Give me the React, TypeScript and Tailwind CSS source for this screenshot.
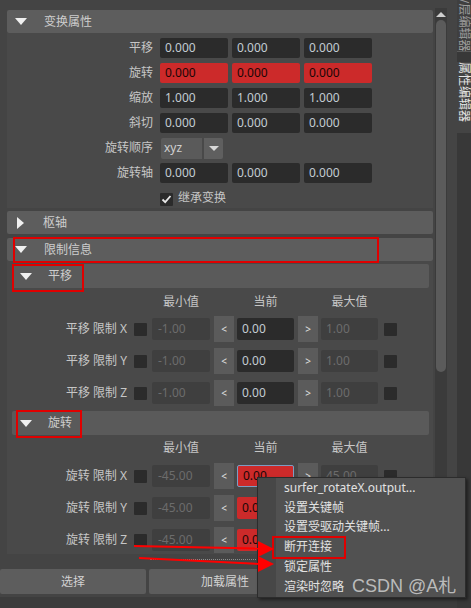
import React from "react";

function TriDown() {
  return <div className="w-0 h-0 border-l-[6px] border-r-[6px] border-t-[7px] border-l-transparent border-r-transparent border-t-[#f0f0f0]" />;
}

function TriRight() {
  return <div className="w-0 h-0 border-t-[6px] border-b-[6px] border-l-[7px] border-t-transparent border-b-transparent border-l-[#f0f0f0]" />;
}

function Header({ title, open, className = "" }: { title: string; open: boolean; className?: string }) {
  return (
    <div className={`h-[23px] bg-[#5d5d5d] rounded-[2px] flex items-center ${className}`}>
      {open ? (
        <div className="ml-[8px]">
          <TriDown />
        </div>
      ) : (
        <div className="ml-[10px] mr-[2px]">
          <TriRight />
        </div>
      )}
      <span className="ml-[17px] text-[12px] text-[#cdcdcd]">{title}</span>
    </div>
  );
}

function SubHeader({ title }: { title: string }) {
  return (
    <div className="ml-[5px] w-[417px] h-[24px] bg-[#5a5a5a] rounded-[2px] flex items-center">
      <div className="ml-[8px]">
        <TriDown />
      </div>
      <span className="ml-[16px] text-[12px] text-[#cdcdcd]">{title}</span>
    </div>
  );
}

function Field({ value, red }: { value: string; red?: boolean }) {
  return (
    <div
      className={`w-[68px] h-[20px] rounded-[2px] flex items-center pl-[5px] text-[12px] ${
        red ? "bg-[#cc2a2a] text-[#1a0606]" : "bg-[#2b2b2b] text-[#c3cbd3]"
      }`}
    >
      {value}
    </div>
  );
}

function Check({ checked }: { checked?: boolean }) {
  return (
    <div className="w-[13px] h-[13px] bg-[#2b2b2b] rounded-[1px] flex items-center justify-center">
      {checked && (
        <svg width="11" height="11" viewBox="0 0 11 11">
          <polyline points="1.5,5.5 4.2,8.2 9.5,2" fill="none" stroke="#e8e8e8" strokeWidth="1.8" />
        </svg>
      )}
    </div>
  );
}

function LimitRow({ label, min, max, red, focus }: { label: string; min: string; max: string; red?: boolean; focus?: boolean }) {
  return (
    <div className="h-[26px] flex items-center">
      <div className="w-[120px] text-right text-[12px] text-[#c6c6c6] whitespace-nowrap">{label}</div>
      <div className="ml-[7px]">
        <Check />
      </div>
      <div className="ml-[5px] w-[58px] h-[22px] rounded-[2px] bg-[#3f3f3f] flex items-center pl-[6px] text-[12px] text-[#6c6c6c]">{min}</div>
      <div className="ml-[4px] w-[20px] h-[26px] bg-[#5b5b5b] flex items-center justify-center text-[10px] text-[#e0e0e0]">&lt;</div>
      <div
        className={`ml-[3px] w-[57px] h-[22px] rounded-[2px] flex items-center pl-[5px] text-[12px] ${
          red ? "bg-[#cc2a2a] text-[#1a0606]" : "bg-[#2b2b2b] text-[#c3cbd3]"
        } ${focus ? "border border-[#7d9cc2]" : ""}`}
      >
        0.00
      </div>
      <div className="ml-[4px] w-[20px] h-[26px] bg-[#5b5b5b] flex items-center justify-center text-[10px] text-[#e0e0e0]">&gt;</div>
      <div className="ml-[3px] w-[57px] h-[22px] rounded-[2px] bg-[#3f3f3f] flex items-center pl-[5px] text-[12px] text-[#6c6c6c]">{max}</div>
      <div className="ml-[6px]">
        <Check />
      </div>
    </div>
  );
}

function ColHeads({ className = "" }: { className?: string }) {
  return (
    <div className={`h-[20px] flex items-center text-[12px] text-[#c6c6c6] ${className}`}>
      <div className="ml-[145px] w-[58px] text-center">最小值</div>
      <div className="ml-[27px] w-[57px] text-center">当前</div>
      <div className="ml-[27px] w-[57px] text-center">最大值</div>
    </div>
  );
}

const xformRows: [string, string, boolean][] = [
  ["平移", "0.000", false],
  ["旋转", "0.000", true],
  ["缩放", "1.000", false],
  ["斜切", "0.000", false],
];

const menuItems = ["surfer_rotateX.output...", "设置关键帧", "设置受驱动关键帧...", "断开连接", "锁定属性", "渲染时忽略"];

export default function App() {
  return (
    <div className="relative w-[471px] h-[608px] overflow-hidden bg-[#444444] flex font-['Noto_Sans','Noto_Sans_CJK_SC',sans-serif] select-none">
      {/* main column */}
      <div className="w-[457px] flex flex-col">
        <div className="h-[566px] flex">
          {/* scroll content */}
          <div className="w-[435px] pt-[10px] overflow-hidden">
            <Header title="变换属性" open className="ml-[7px] w-[426px]" />
            <div className="ml-[7px] w-[426px] bg-[#494949] pt-[5px] flex flex-col gap-[5px]">
              {xformRows.map(([label, v, red]) => (
                <div key={label} className="h-[20px] flex items-center">
                  <div className="w-[146px] text-right text-[12px] text-[#c6c6c6]">{label}</div>
                  <div className="ml-[7px] flex gap-[4px]">
                    <Field value={v} red={red} />
                    <Field value={v} red={red} />
                    <Field value={v} red={red} />
                  </div>
                </div>
              ))}
              <div className="h-[20px] flex items-center">
                <div className="w-[146px] text-right text-[12px] text-[#c6c6c6]">旋转顺序</div>
                <div className="ml-[8px] w-[41px] h-[21px] bg-[#5a5a5a] rounded-l-[2px] flex items-center pl-[3px] text-[12px] text-[#d0d0d0]">xyz</div>
                <div className="ml-[2px] w-[19px] h-[21px] bg-[#5f5f5f] rounded-r-[2px] flex items-center justify-center">
                  <div className="w-0 h-0 border-l-[5px] border-r-[5px] border-t-[5px] border-l-transparent border-r-transparent border-t-[#d8d8d8]" />
                </div>
              </div>
              <div className="h-[20px] flex items-center">
                <div className="w-[146px] text-right text-[12px] text-[#c6c6c6]">旋转轴</div>
                <div className="ml-[7px] flex gap-[4px]">
                  <Field value="0.000" />
                  <Field value="0.000" />
                  <Field value="0.000" />
                </div>
              </div>
              <div className="h-[20px] flex items-center">
                <div className="ml-[153px] mt-[2px]">
                  <Check checked />
                </div>
                <span className="ml-[5px] text-[12px] text-[#c6c6c6]">继承变换</span>
              </div>
            </div>

            <Header title="枢轴" open={false} className="ml-[7px] w-[426px] mt-[3px]" />
            <Header title="限制信息" open className="ml-[7px] w-[426px] mt-[4px]" />

            <div className="ml-[7px] w-[426px] bg-[#494949] pt-[3px] pb-[1px]">
              <SubHeader title="平移" />
              <ColHeads className="mt-[4px]" />
              <div className="mt-[4px] flex flex-col gap-[6px]">
                <LimitRow label="平移 限制 X" min="-1.00" max="1.00" />
                <LimitRow label="平移 限制 Y" min="-1.00" max="1.00" />
                <LimitRow label="平移 限制 Z" min="-1.00" max="1.00" />
              </div>
              <div className="mt-[5px]">
                <SubHeader title="旋转" />
              </div>
              <ColHeads className="mt-[3px]" />
              <div className="mt-[5px] flex flex-col gap-[6px]">
                <LimitRow label="旋转 限制 X" min="-45.00" max="45.00" red focus />
                <LimitRow label="旋转 限制 Y" min="-45.00" max="45.00" red />
                <LimitRow label="旋转 限制 Z" min="-45.00" max="45.00" red />
              </div>
            </div>
            <div className="mt-[5px] ml-[150px] w-[150px] border-t border-dotted border-[#8c8c8c]" />
          </div>

          {/* scrollbar */}
          <div className="w-[12px] mt-[8px] flex flex-col bg-[#3b3b3b]">
            <div className="h-[12px] flex items-center justify-center">
              <div className="w-0 h-0 border-l-[5px] border-r-[5px] border-b-[5px] border-l-transparent border-r-transparent border-b-[#cfcfcf]" />
            </div>
            <div className="mx-auto w-[10px] h-[352px] rounded-full bg-[#5b5b5b]" />
          </div>
          <div className="w-[10px]" />
        </div>

        {/* bottom buttons */}
        <div className="mt-[3px] h-[25px] flex gap-[3px] text-[12px] text-[#d2d2d2]">
          <div className="w-[146px] bg-[#5d5d5d] rounded-[2px] flex items-center justify-center">选择</div>
          <div className="w-[152px] bg-[#5d5d5d] rounded-[2px] flex items-center justify-center">加载属性</div>
          <div className="flex-1 bg-[#5d5d5d] rounded-[2px] flex items-center justify-center">复制选项卡</div>
        </div>
        <div className="mt-[3px] flex-1 bg-[#3c3c3c]" />
      </div>

      {/* right tab strip */}
      <div className="w-[14px] bg-[#383838] flex flex-col">
        <div className="h-[52px] bg-[#3f3f3f] border-b border-[#5a5a5a] overflow-hidden flex flex-col justify-end items-center">
          <span className="[writing-mode:vertical-rl] [text-orientation:sideways] text-[12px] leading-[14px] text-[#9c9c9c] whitespace-nowrap">通道盒/层编辑器</span>
        </div>
        <div className="mt-[10px] h-[71px] bg-[#444444] flex justify-center">
          <span className="[writing-mode:vertical-rl] [text-orientation:sideways] text-[12px] leading-[14px] text-[#e6e6e6] whitespace-nowrap">属性编辑器</span>
        </div>
      </div>

      {/* context menu */}
      <div className="absolute left-[257px] top-[477px] w-[209px] h-[121px] bg-[#515151] border border-[#2c2c2c] shadow-[2px_2px_3px_rgba(0,0,0,0.45)] flex">
        <div className="w-[18px] bg-[#474747]" />
        <div className="flex flex-col pl-[8px]">
          {menuItems.map((t) => (
            <div key={t} className="h-[19.8px] flex items-center text-[12px] text-[#e2e2e2] whitespace-nowrap">
              {t}
            </div>
          ))}
        </div>
      </div>

      {/* annotation boxes */}
      <div className="absolute left-[13px] top-[237px] w-[366px] h-[26px] border-2 border-[#e00000] pointer-events-none" />
      <div className="absolute left-[12px] top-[264px] w-[72px] h-[28px] border-2 border-[#e00000] pointer-events-none" />
      <div className="absolute left-[16px] top-[410px] w-[66px] h-[28px] border-2 border-[#e00000] pointer-events-none" />
      <div className="absolute left-[272px] top-[536px] w-[74px] h-[23px] border-2 border-[#e00000] pointer-events-none" />

      <svg className="absolute left-0 top-0 pointer-events-none" width="471" height="608">
        <line x1="134" y1="546" x2="260" y2="548.5" stroke="#ff0000" strokeWidth="2" />
        <polygon points="258,541 274,549 258,557" fill="#ff0000" />
        <line x1="139" y1="558" x2="260" y2="564" stroke="#ff0000" strokeWidth="2" />
        <polygon points="258,556 274,564 258,572" fill="#ff0000" />
      </svg>

      {/* watermark */}
      <div className="absolute left-[352px] top-[574px] text-[18px] leading-[24px] text-[#d8d8d8]/80 font-['Liberation_Sans','Noto_Sans_CJK_SC',sans-serif] whitespace-nowrap">
        CSDN @A札
      </div>
    </div>
  );
}
